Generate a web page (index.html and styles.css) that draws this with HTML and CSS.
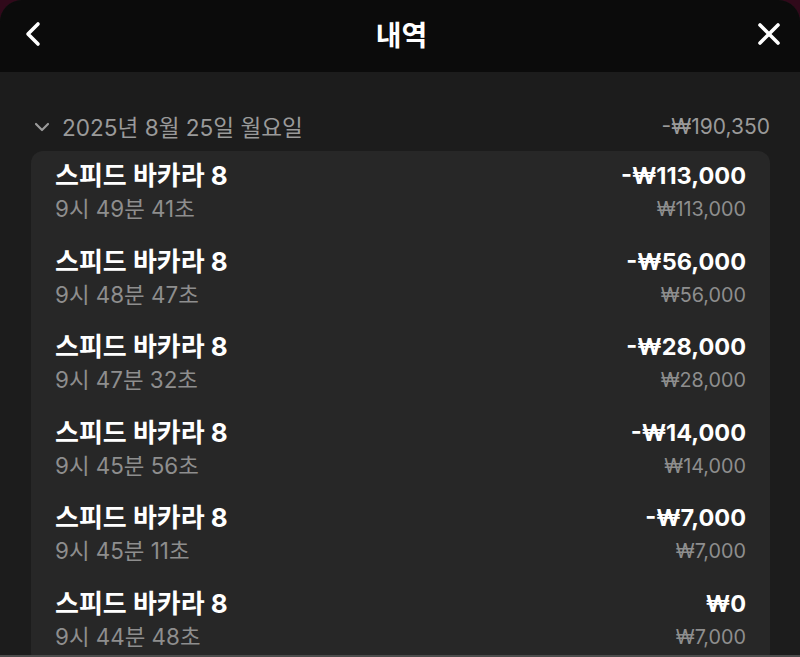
FILE: index.html
```html
<!DOCTYPE html>
<html lang="ko">
<head>
<meta charset="utf-8">
<title>내역</title>
<link rel="stylesheet" href="styles.css">
</head>
<body>
<div class="sheet">
  <header class="header">
    <button class="icon-btn back" aria-label="뒤로">
      <svg width="24" height="28" viewBox="0 0 24 28"><polyline points="16,4 6,14 16,24" fill="none" stroke="#fff" stroke-width="3.6" stroke-linecap="round" stroke-linejoin="round"/></svg>
    </button>
    <h1 class="title">내역</h1>
    <button class="icon-btn close" aria-label="닫기">
      <svg width="28" height="28" viewBox="0 0 28 28"><path d="M5 5 L23 23 M23 5 L5 23" fill="none" stroke="#fff" stroke-width="3.6" stroke-linecap="round"/></svg>
    </button>
  </header>
  <main class="content">
    <div class="date-row">
      <div class="date-left">
        <svg class="chev" width="16" height="10" viewBox="0 0 16 10"><polyline points="2,2 8,8 14,2" fill="none" stroke="#9a9a9a" stroke-width="2.2" stroke-linecap="round" stroke-linejoin="round"/></svg>
        <span class="date">2025년 8월 25일 월요일</span>
      </div>
      <span class="total">-₩190,350</span>
    </div>
    <div class="card">
      <div class="row">
        <div class="col"><div class="name">스피드 바카라 8</div><div class="time">9시 49분 41초</div></div>
        <div class="col right"><div class="amount">-₩113,000</div><div class="bet">₩113,000</div></div>
      </div>
      <div class="row">
        <div class="col"><div class="name">스피드 바카라 8</div><div class="time">9시 48분 47초</div></div>
        <div class="col right"><div class="amount">-₩56,000</div><div class="bet">₩56,000</div></div>
      </div>
      <div class="row">
        <div class="col"><div class="name">스피드 바카라 8</div><div class="time">9시 47분 32초</div></div>
        <div class="col right"><div class="amount">-₩28,000</div><div class="bet">₩28,000</div></div>
      </div>
      <div class="row">
        <div class="col"><div class="name">스피드 바카라 8</div><div class="time">9시 45분 56초</div></div>
        <div class="col right"><div class="amount">-₩14,000</div><div class="bet">₩14,000</div></div>
      </div>
      <div class="row">
        <div class="col"><div class="name">스피드 바카라 8</div><div class="time">9시 45분 11초</div></div>
        <div class="col right"><div class="amount">-₩7,000</div><div class="bet">₩7,000</div></div>
      </div>
      <div class="row">
        <div class="col"><div class="name">스피드 바카라 8</div><div class="time">9시 44분 48초</div></div>
        <div class="col right"><div class="amount">₩0</div><div class="bet">₩7,000</div></div>
      </div>
    </div>
  </main>
</div>
</body>
</html>
```
FILE: styles.css
```css
html, body {
  margin: 0;
  padding: 0;
  background: #30091a;
}
body {
  font-family: "Inter", "Noto Sans CJK KR", sans-serif;
}
.sheet {
  height: 657px;
  box-sizing: border-box;
  overflow: hidden;
  background: #1c1c1c;
  border-radius: 22px 22px 0 0;
  border-bottom: 2px solid #4c4c4c;
  display: flex;
  flex-direction: column;
}
.header {
  height: 72px;
  flex: none;
  background: #0b0b0b;
  display: flex;
  align-items: center;
  justify-content: space-between;
  padding: 0 17px 0 20px;
  box-sizing: border-box;
}
.icon-btn {
  background: none;
  border: 0;
  padding: 0;
  width: 28px;
  height: 28px;
  display: flex;
  align-items: center;
  justify-content: center;
  margin-top: -4px;
}
.title {
  margin: 0 0 4px;
  font-family: "Noto Sans CJK KR", sans-serif;
  font-size: 28px;
  font-weight: 700;
  color: #fff;
}
.content {
  padding: 0 30px 0 31px;
}
.date-row {
  display: flex;
  justify-content: space-between;
  align-items: center;
  height: 32px;
  padding-top: 38px;
  margin-bottom: 9px;
  color: #9a9a9a;
}
.date-left {
  display: flex;
  align-items: center;
  gap: 12px;
  padding-left: 3px;
}
.date {
  font-size: 22.6px;
}
.total {
  font-size: 21px;
}
.chev {
  margin-top: 2px;
}
.card {
  background: #272727;
  border-radius: 12px;
}
.row {
  display: flex;
  justify-content: space-between;
  padding: 10px 24px 13.6px;
}
.col {
  display: flex;
  flex-direction: column;
  gap: 4px;
}
.right {
  align-items: flex-end;
}
.name {
  font-size: 26px;
  font-weight: 700;
  line-height: 30px;
  color: #fff;
}
.time {
  font-size: 22.4px;
  line-height: 28px;
  color: #8e8e8e;
}
.amount {
  font-size: 23.5px;
  font-weight: 700;
  line-height: 30px;
  color: #fff;
}
.bet {
  font-size: 19.8px;
  line-height: 28px;
  color: #8e8e8e;
}
```
